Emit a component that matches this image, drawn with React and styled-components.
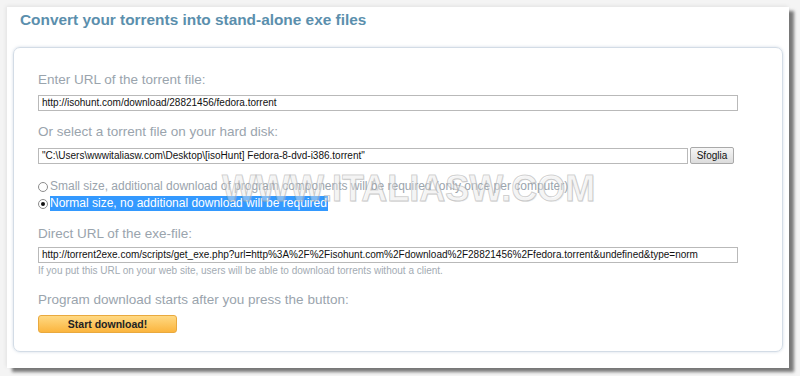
import React from "react";
import styled, { createGlobalStyle } from "styled-components";

const GlobalStyle = createGlobalStyle`
  body {
    margin: 0;
    background: #f4f4f4;
    font-family: "Liberation Sans", Arial, sans-serif;
  }
`;

const Page = styled.div`
  width: 800px;
  height: 376px;
  padding: 7px 0 0 7px;
  box-sizing: border-box;
  overflow: hidden;
`;

const Window = styled.div`
  position: relative;
  width: 782px;
  height: 361px;
  background: #fff;
  box-shadow: 5px 4px 3px rgba(0, 0, 0, 0.5), -1px -1px 4px rgba(0, 0, 0, 0.08);
  padding: 0 6px 0 6px;
  box-sizing: border-box;
`;

const Title = styled.h1`
  margin: 0;
  padding: 4px 0 0 7px;
  height: 40px;
  box-sizing: border-box;
  font-size: 15.4px;
  font-weight: bold;
  color: #5b8fad;
`;

const Box = styled.div`
  height: 305px;
  border: 1px solid #d3dce6;
  border-radius: 7px;
  box-shadow: 0 0 3px rgba(150, 170, 195, 0.45);
  padding: 24px 24px 0 24px;
  box-sizing: border-box;
`;

const Label = styled.div`
  font-size: 13.5px;
  color: #9aa4ad;
  line-height: 16px;
  margin-bottom: ${(p) => p.gap ?? 7}px;
`;

const Field = styled.div`
  width: ${(p) => p.width || 700}px;
  height: 16px;
  border: 1px solid #b9b9b9;
  box-sizing: border-box;
  font-size: 10px;
  line-height: 14px;
  padding-left: 3px;
  color: #111;
  white-space: nowrap;
  overflow: hidden;
`;

const Row = styled.div`
  display: flex;
  align-items: center;
  gap: 2px;
`;

const Browse = styled.div`
  width: 44px;
  height: 17px;
  border: 1px solid #a9a9a9;
  border-radius: 2px;
  background: linear-gradient(#f6f6f6, #dcdcdc);
  font-size: 10px;
  line-height: 15px;
  text-align: center;
  color: #111;
  box-sizing: border-box;
`;

const Section = styled.div`
  margin-bottom: ${(p) => p.mb || 0}px;
`;

const Option = styled.div`
  display: flex;
  align-items: center;
  font-size: 12px;
  line-height: 15px;
  color: #9aa4ad;
  height: 17px;
`;

const Radio = styled.span`
  width: 10px;
  height: 10px;
  border-radius: 50%;
  border: 1px solid #8c8c8c;
  background: #fff;
  box-sizing: border-box;
  margin-right: 2px;
  display: flex;
  align-items: center;
  justify-content: center;
  &::after {
    content: "";
    width: 4px;
    height: 4px;
    border-radius: 50%;
    background: ${(p) => (p.checked ? "#111" : "transparent")};
  }
`;

const Selected = styled.span`
  background: #3399ff;
  color: #fff;
  padding-right: 1px;
`;

const Hint = styled.div`
  font-size: 10px;
  color: #a3abb3;
  line-height: 14px;
  margin-top: 1px;
`;

const StartButton = styled.div`
  width: 139px;
  height: 18px;
  border-radius: 3px;
  border: 1px solid #e9a93e;
  background: linear-gradient(#ffd983, #fbb53e);
  box-sizing: border-box;
  font-size: 10.5px;
  font-weight: bold;
  color: #222;
  text-align: center;
  line-height: 16px;
`;

const Watermark = styled.div`
  position: absolute;
  left: 215px;
  top: 164px;
  font-family: "Liberation Sans", Arial, sans-serif;
  font-weight: bold;
  font-size: 36px;
  line-height: 1;
  color: rgba(255, 255, 255, 0.25);
  -webkit-text-stroke: 1px rgba(150, 150, 150, 0.45);
  text-shadow: 1px 1px 0 rgba(200, 200, 200, 0.25);
  pointer-events: none;
  white-space: nowrap;
`;

export default function App() {
  return (
    <>
      <GlobalStyle />
      <Page>
        <Window>
          <Title>Convert your torrents into stand-alone exe files</Title>
          <Box>
            <Section mb={13}>
              <Label>Enter URL of the torrent file:</Label>
              <Field>http://isohunt.com/download/28821456/fedora.torrent</Field>
            </Section>
            <Section mb={14}>
              <Label>Or select a torrent file on your hard disk:</Label>
              <Row>
                <Field width={650}>"C:\Users\wwwitaliasw.com\Desktop\[isoHunt] Fedora-8-dvd-i386.torrent"</Field>
                <Browse>Sfoglia</Browse>
              </Row>
            </Section>
            <Section mb={14}>
              <Option>
                <Radio />
                Small size, additional download of program components will be required (only once per computer)
              </Option>
              <Option>
                <Radio checked />
                <Selected>Normal size, no additional download will be required</Selected>
              </Option>
            </Section>
            <Section mb={14}>
              <Label gap={5}>Direct URL of the exe-file:</Label>
              <Field>http://torrent2exe.com/scripts/get_exe.php?url=http%3A%2F%2Fisohunt.com%2Fdownload%2F28821456%2Ffedora.torrent&amp;undefined&amp;type=norm</Field>
              <Hint>If you put this URL on your web site, users will be able to download torrents without a client.</Hint>
            </Section>
            <Section>
              <Label gap={7}>Program download starts after you press the button:</Label>
              <StartButton>Start download!</StartButton>
            </Section>
          </Box>
          <Watermark>WWW.ITALIASW.COM</Watermark>
        </Window>
      </Page>
    </>
  );
}
